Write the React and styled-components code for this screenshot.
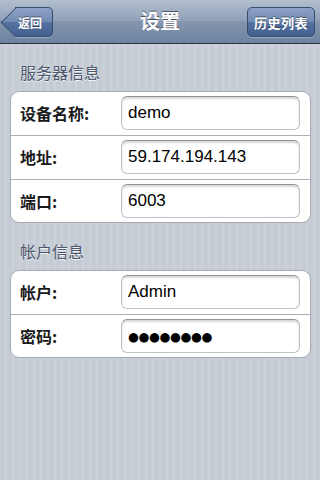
import React from "react";
import styled, { createGlobalStyle } from "styled-components";

const GlobalStyle = createGlobalStyle`
    html, body {
        margin: 0;
        padding: 0;
    }
    body {
        font-family: "Liberation Sans", "Noto Sans CJK SC", sans-serif;
    }
`;

const serverRows = [
    { label: "设备名称:", value: "demo" },
    { label: "地址:", value: "59.174.194.143" },
    { label: "端口:", value: "6003" },
];

const accountRows = [
    { label: "帐户:", value: "Admin" },
    { label: "密码:", value: "●●●●●●●●", secret: true },
];

function App() {
    return (
        <Page>
            <GlobalStyle />
            <NavBar>
                <BackButton>
                    <ButtonText>返回</ButtonText>
                </BackButton>
                <Title>设置</Title>
                <BarButton>历史列表</BarButton>
            </NavBar>

            <SectionHeader>服务器信息</SectionHeader>
            <Group>
                {serverRows.map((row) => (
                    <Row key={row.label}>
                        <Label>{row.label}</Label>
                        <Field>{row.value}</Field>
                    </Row>
                ))}
            </Group>

            <SectionHeader>帐户信息</SectionHeader>
            <Group>
                {accountRows.map((row) => (
                    <Row key={row.label}>
                        <Label>{row.label}</Label>
                        <Field secret={row.secret}>{row.value}</Field>
                    </Row>
                ))}
            </Group>
        </Page>
    );
}

export default App;

const Page = styled.div`
    width: 320px;
    min-height: 480px;
    background: repeating-linear-gradient(
        90deg,
        #c5ccd4 0px,
        #c5ccd4 5px,
        #cbd2d9 5px,
        #cbd2d9 7px
    );
    overflow: hidden;
`;

const NavBar = styled.div`
    height: 43px;
    border-bottom: 1px solid #2d3642;
    background: linear-gradient(
        #b3bfcf 0%,
        #909fb7 50%,
        #8596ae 50%,
        #6d83a1 100%
    );
    display: flex;
    align-items: center;
    justify-content: space-between;
    padding: 0 5px 0 15px;
    position: relative;
`;

const buttonGradient = `
    #8da3c4 0%,
    #6f89b1 50%,
    #56729f 50%,
    #415f91 100%
`;

const BackButton = styled.div`
    position: relative;
    z-index: 1;
    height: 28px;
    width: 37px;
    margin-top: 1px;
    border: 1px solid #374e70;
    border-left: none;
    border-radius: 0 5px 5px 0;
    background: linear-gradient(${buttonGradient});
    display: flex;
    align-items: center;
    justify-content: center;
    box-shadow: 0 1px 0 rgba(255, 255, 255, 0.25);

    &::before {
        content: "";
        position: absolute;
        left: -10px;
        top: 4px;
        width: 20px;
        height: 20px;
        transform: rotate(45deg);
        border-left: 1px solid #374e70;
        border-bottom: 1px solid #374e70;
        background: linear-gradient(135deg, ${buttonGradient});
    }
`;

const ButtonText = styled.span`
    position: relative;
    margin-left: -7px;
    color: #fff;
    font: bold 12px "Noto Sans CJK SC", sans-serif;
    text-shadow: 0 -1px 0 rgba(0, 0, 0, 0.45);
`;

const Title = styled.div`
    position: absolute;
    left: 0;
    right: 0;
    top: -1px;
    text-align: center;
    color: #fff;
    font: bold 20px "Noto Sans CJK SC", sans-serif;
    line-height: 44px;
    text-shadow: 0 -1px 0 rgba(0, 0, 0, 0.5);
    pointer-events: none;
`;

const BarButton = styled.div`
    height: 28px;
    padding: 0 6px;
    margin-top: 1px;
    border: 1px solid #374e70;
    border-radius: 5px;
    background: linear-gradient(${buttonGradient});
    color: #fff;
    font: bold 13px "Noto Sans CJK SC", sans-serif;
    letter-spacing: 0.5px;
    display: flex;
    align-items: center;
    text-shadow: 0 -1px 0 rgba(0, 0, 0, 0.45);
    box-shadow: 0 1px 0 rgba(255, 255, 255, 0.25);
    position: relative;
    z-index: 1;
`;

const SectionHeader = styled.div`
    padding: 18px 0 9px 20px;
    font: 16px "Noto Sans CJK SC", sans-serif;
    line-height: 20px;
    color: #4c566c;
    text-shadow: 0 1px 0 rgba(255, 255, 255, 0.8);
`;

const Group = styled.div`
    margin: 0 9px 0 10px;
    background: #fff;
    border: 1px solid #a7abb0;
    border-radius: 9px;
    overflow: hidden;
`;

const Row = styled.div`
    height: 43px;
    display: flex;
    align-items: flex-start;
    padding: 0 9px;
    border-bottom: 1px solid #abaeb2;

    &:last-child {
        height: 42px;
        border-bottom: none;
    }
`;

const Label = styled.div`
    width: 101px;
    flex-shrink: 0;
    font: bold 16px "Noto Sans CJK SC", sans-serif;
    line-height: 43px;
    color: #1a1a1a;
`;

const Field = styled.div`
    width: 179px;
    height: 34px;
    box-sizing: border-box;
    margin-top: 4px;
    border: 1px solid #c0c3c6;
    border-top-color: #8f949a;
    border-radius: 6px;
    box-shadow: inset 0 2px 2px rgba(0, 0, 0, 0.16);
    padding-left: 6px;
    display: flex;
    align-items: center;
    font-family: ${({ secret }) =>
        secret ? '"DejaVu Sans", sans-serif' : '"Liberation Sans", sans-serif'};
    font-size: ${({ secret }) => (secret ? "12.5px" : "17px")};
    letter-spacing: ${({ secret }) => (secret ? "-0.4px" : "0")};
    color: #000;
`;
